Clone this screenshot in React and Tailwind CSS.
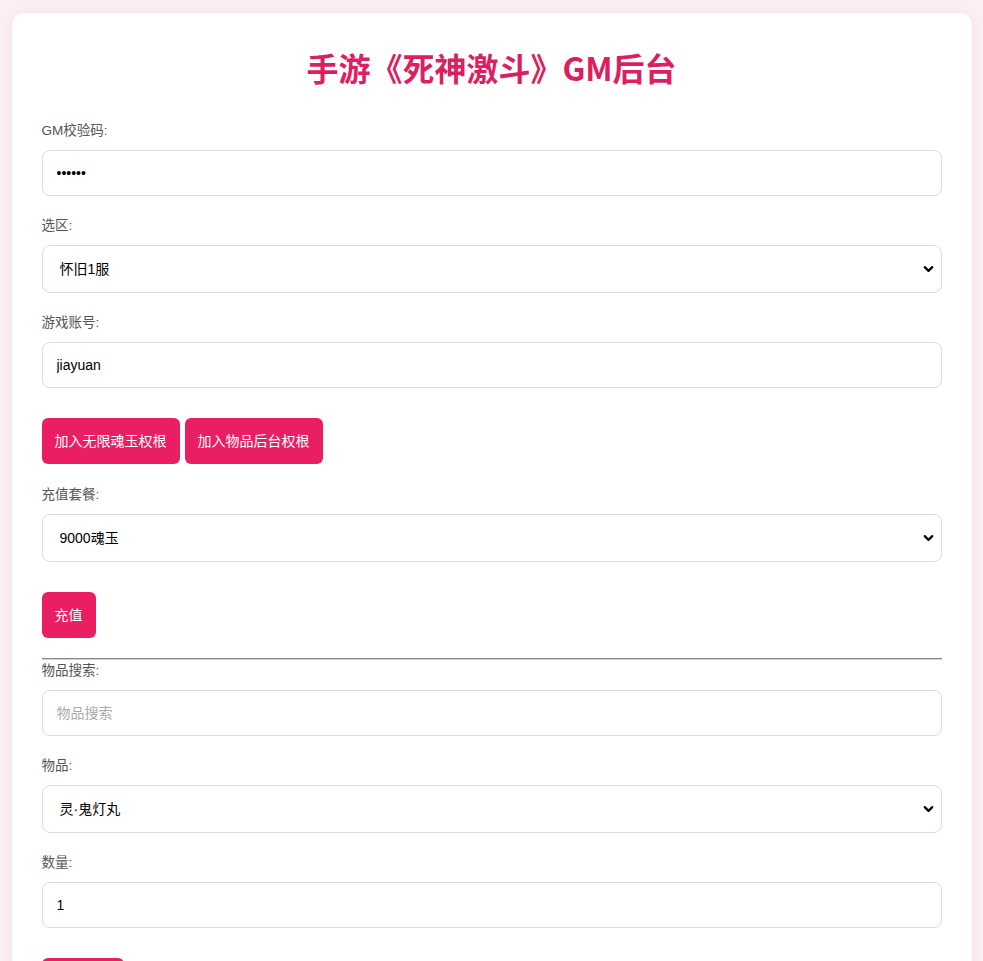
import React, { useState } from 'react';
import { ChevronDown } from 'lucide-react';

const font = { fontFamily: '"Liberation Sans", "Noto Sans CJK SC", sans-serif' };

const Label = ({ children }) => (
  <label className="block text-[13.5px] leading-[20px] text-[#555] mb-[9px]">{children}</label>
);

const TextInput = ({ type = 'text', value, placeholder, onChange }) => (
  <input
    type={type}
    value={value}
    placeholder={placeholder}
    onChange={onChange}
    className="block w-full h-[46px] px-[14px] text-[14px] text-black rounded-lg border border-[#dcdcdc] bg-white placeholder:text-[#aaa] focus:outline-none mb-[20px]"
  />
);

const SelectBox = ({ value, options, onChange }) => (
  <div className="relative mb-[20px]">
    <select
      value={value}
      onChange={onChange}
      className="block w-full h-[48px] pl-[17px] pr-8 text-[14px] text-black rounded-lg border border-[#dcdcdc] bg-white appearance-none focus:outline-none"
    >
      {options.map(o => (
        <option key={o} value={o}>{o}</option>
      ))}
    </select>
    <ChevronDown className="absolute right-[6px] top-1/2 -translate-y-1/2 w-[15px] h-[15px] text-black pointer-events-none" strokeWidth={3.5} />
  </div>
);

const PinkButton = ({ children }) => (
  <button className="h-[46px] px-[13px] rounded-md bg-[#e91e63] text-white text-[14px] leading-none">
    {children}
  </button>
);

export default function App() {
  const [code, setCode] = useState('123456');
  const [server, setServer] = useState('怀旧1服');
  const [account, setAccount] = useState('jiayuan');
  const [pkg, setPkg] = useState('9000魂玉');
  const [search, setSearch] = useState('');
  const [item, setItem] = useState('灵·鬼灯丸');
  const [qty, setQty] = useState('1');

  return (
    <div className="min-h-screen bg-[#fbeff4] pt-[13px] pb-10" style={font}>
      <div className="max-w-[960px] mx-auto bg-white rounded-xl shadow-[0_0_12px_rgba(233,30,99,0.08)] px-[30px] pt-[30px] pb-[30px]">
        <h1
          className="text-center text-[32px] leading-[48px] font-bold text-[#dc1f62] mb-[30px]"
          style={{ fontFamily: '"Noto Sans CJK SC", "Noto Sans", sans-serif' }}
        >
          手游《死神激斗》GM后台
        </h1>

        {/* 账号信息 */}
        <Label>GM校验码:</Label>
        <TextInput type="password" value={code} onChange={e => setCode(e.target.value)} />

        <Label>选区:</Label>
        <SelectBox value={server} options={['怀旧1服', '怀旧2服']} onChange={e => setServer(e.target.value)} />

        <Label>游戏账号:</Label>
        <TextInput value={account} onChange={e => setAccount(e.target.value)} />

        <div className="flex gap-[5px] mt-[30px] mb-[21px]">
          <PinkButton>加入无限魂玉权根</PinkButton>
          <PinkButton>加入物品后台权根</PinkButton>
        </div>

        {/* 充值 */}
        <Label>充值套餐:</Label>
        <SelectBox value={pkg} options={['9000魂玉', '18000魂玉']} onChange={e => setPkg(e.target.value)} />

        <div className="mt-[30px]">
          <PinkButton>充值</PinkButton>
        </div>

        <div className="mt-[20px] mb-[1px] border-t border-t-[#8a8a8a] border-b border-b-[#d0d0d0]" />

        {/* 物品 */}
        <Label>物品搜索:</Label>
        <TextInput value={search} placeholder="物品搜索" onChange={e => setSearch(e.target.value)} />

        <Label>物品:</Label>
        <SelectBox value={item} options={['灵·鬼灯丸', '灵·斩月']} onChange={e => setItem(e.target.value)} />

        <Label>数量:</Label>
        <TextInput value={qty} onChange={e => setQty(e.target.value)} />

        <div className="mt-[30px]">
          <PinkButton>发送物品</PinkButton>
        </div>
      </div>
    </div>
  );
}
